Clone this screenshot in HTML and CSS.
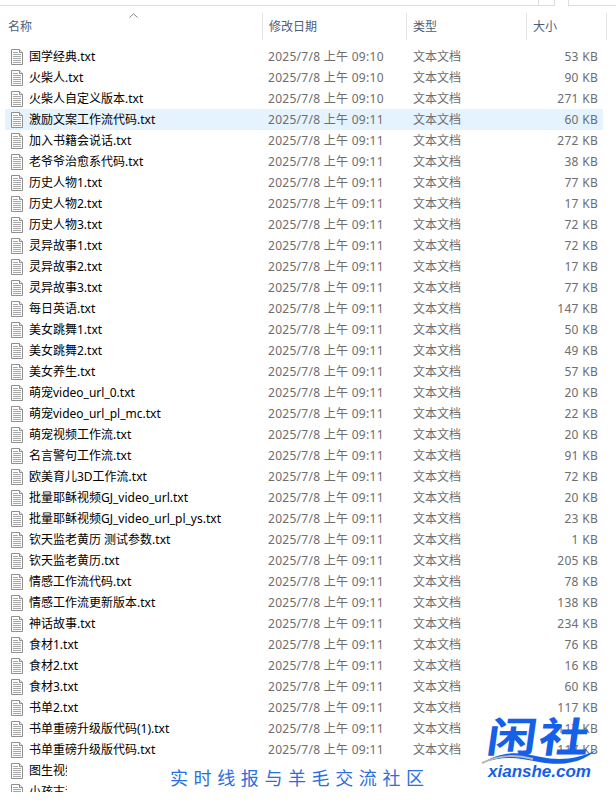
FILE: index.html
```html
<!DOCTYPE html>
<html lang="zh-CN">
<head>
  <meta charset="UTF-8">
  <title>文件列表</title>
  <link rel="stylesheet" href="styles.css">
</head>
<body>
  <svg class="defs" width="0" height="0">
    <symbol id="txt" viewBox="0 0 16 16">
      <path d="M2.5 .5H10.5L13.5 3.5V15.5H2.5Z" fill="#fff" stroke="#8f8f8f"/>
      <path d="M10.5 .5V3.5H13.5" fill="#e8e8e8" stroke="#8f8f8f"/>
      <path d="M4 3.5H9M4 5.5H12M4 7.5H12M4 9.5H12M4 11.5H12M4 13.5H12" stroke="#a6a6a6"/>
    </symbol>
  </svg>

  <div class="topbar">
    <div class="topline"></div>
    <div class="topline gap-a"></div>
    <div class="topline gap-b"></div>
  </div>

  <div class="head">
    <div class="hcell name-h">
      <svg class="sort" viewBox="0 0 9 5"><path d="M.5 4.5L4.5 .8L8.5 4.5" fill="none" stroke="#7d8794"/></svg>
      名称
    </div>
    <div class="hcell">修改日期</div>
    <div class="hcell">类型</div>
    <div class="hcell">大小</div>
  </div>

  <div class="list">
    <div class="row"><div class="name"><svg class="ico"><use href="#txt"/></svg>国学经典.txt</div><div class="date">2025/7/8 上午 09:10</div><div class="type">文本文档</div><div class="size">53 KB</div></div>
    <div class="row"><div class="name"><svg class="ico"><use href="#txt"/></svg>火柴人.txt</div><div class="date">2025/7/8 上午 09:10</div><div class="type">文本文档</div><div class="size">90 KB</div></div>
    <div class="row"><div class="name"><svg class="ico"><use href="#txt"/></svg>火柴人自定义版本.txt</div><div class="date">2025/7/8 上午 09:10</div><div class="type">文本文档</div><div class="size">271 KB</div></div>
    <div class="row selected"><div class="name"><svg class="ico"><use href="#txt"/></svg>激励文案工作流代码.txt</div><div class="date">2025/7/8 上午 09:11</div><div class="type">文本文档</div><div class="size">60 KB</div></div>
    <div class="row"><div class="name"><svg class="ico"><use href="#txt"/></svg>加入书籍会说话.txt</div><div class="date">2025/7/8 上午 09:11</div><div class="type">文本文档</div><div class="size">272 KB</div></div>
    <div class="row"><div class="name"><svg class="ico"><use href="#txt"/></svg>老爷爷治愈系代码.txt</div><div class="date">2025/7/8 上午 09:11</div><div class="type">文本文档</div><div class="size">38 KB</div></div>
    <div class="row"><div class="name"><svg class="ico"><use href="#txt"/></svg>历史人物1.txt</div><div class="date">2025/7/8 上午 09:11</div><div class="type">文本文档</div><div class="size">77 KB</div></div>
    <div class="row"><div class="name"><svg class="ico"><use href="#txt"/></svg>历史人物2.txt</div><div class="date">2025/7/8 上午 09:11</div><div class="type">文本文档</div><div class="size">17 KB</div></div>
    <div class="row"><div class="name"><svg class="ico"><use href="#txt"/></svg>历史人物3.txt</div><div class="date">2025/7/8 上午 09:11</div><div class="type">文本文档</div><div class="size">72 KB</div></div>
    <div class="row"><div class="name"><svg class="ico"><use href="#txt"/></svg>灵异故事1.txt</div><div class="date">2025/7/8 上午 09:11</div><div class="type">文本文档</div><div class="size">72 KB</div></div>
    <div class="row"><div class="name"><svg class="ico"><use href="#txt"/></svg>灵异故事2.txt</div><div class="date">2025/7/8 上午 09:11</div><div class="type">文本文档</div><div class="size">17 KB</div></div>
    <div class="row"><div class="name"><svg class="ico"><use href="#txt"/></svg>灵异故事3.txt</div><div class="date">2025/7/8 上午 09:11</div><div class="type">文本文档</div><div class="size">77 KB</div></div>
    <div class="row"><div class="name"><svg class="ico"><use href="#txt"/></svg>每日英语.txt</div><div class="date">2025/7/8 上午 09:11</div><div class="type">文本文档</div><div class="size">147 KB</div></div>
    <div class="row"><div class="name"><svg class="ico"><use href="#txt"/></svg>美女跳舞1.txt</div><div class="date">2025/7/8 上午 09:11</div><div class="type">文本文档</div><div class="size">50 KB</div></div>
    <div class="row"><div class="name"><svg class="ico"><use href="#txt"/></svg>美女跳舞2.txt</div><div class="date">2025/7/8 上午 09:11</div><div class="type">文本文档</div><div class="size">49 KB</div></div>
    <div class="row"><div class="name"><svg class="ico"><use href="#txt"/></svg>美女养生.txt</div><div class="date">2025/7/8 上午 09:11</div><div class="type">文本文档</div><div class="size">57 KB</div></div>
    <div class="row"><div class="name"><svg class="ico"><use href="#txt"/></svg>萌宠video_url_0.txt</div><div class="date">2025/7/8 上午 09:11</div><div class="type">文本文档</div><div class="size">20 KB</div></div>
    <div class="row"><div class="name"><svg class="ico"><use href="#txt"/></svg>萌宠video_url_pl_mc.txt</div><div class="date">2025/7/8 上午 09:11</div><div class="type">文本文档</div><div class="size">22 KB</div></div>
    <div class="row"><div class="name"><svg class="ico"><use href="#txt"/></svg>萌宠视频工作流.txt</div><div class="date">2025/7/8 上午 09:11</div><div class="type">文本文档</div><div class="size">20 KB</div></div>
    <div class="row"><div class="name"><svg class="ico"><use href="#txt"/></svg>名言警句工作流.txt</div><div class="date">2025/7/8 上午 09:11</div><div class="type">文本文档</div><div class="size">91 KB</div></div>
    <div class="row"><div class="name"><svg class="ico"><use href="#txt"/></svg>欧美育儿3D工作流.txt</div><div class="date">2025/7/8 上午 09:11</div><div class="type">文本文档</div><div class="size">72 KB</div></div>
    <div class="row"><div class="name"><svg class="ico"><use href="#txt"/></svg>批量耶稣视频GJ_video_url.txt</div><div class="date">2025/7/8 上午 09:11</div><div class="type">文本文档</div><div class="size">20 KB</div></div>
    <div class="row"><div class="name"><svg class="ico"><use href="#txt"/></svg>批量耶稣视频GJ_video_url_pl_ys.txt</div><div class="date">2025/7/8 上午 09:11</div><div class="type">文本文档</div><div class="size">23 KB</div></div>
    <div class="row"><div class="name"><svg class="ico"><use href="#txt"/></svg>钦天监老黄历 测试参数.txt</div><div class="date">2025/7/8 上午 09:11</div><div class="type">文本文档</div><div class="size">1 KB</div></div>
    <div class="row"><div class="name"><svg class="ico"><use href="#txt"/></svg>钦天监老黄历.txt</div><div class="date">2025/7/8 上午 09:11</div><div class="type">文本文档</div><div class="size">205 KB</div></div>
    <div class="row"><div class="name"><svg class="ico"><use href="#txt"/></svg>情感工作流代码.txt</div><div class="date">2025/7/8 上午 09:11</div><div class="type">文本文档</div><div class="size">78 KB</div></div>
    <div class="row"><div class="name"><svg class="ico"><use href="#txt"/></svg>情感工作流更新版本.txt</div><div class="date">2025/7/8 上午 09:11</div><div class="type">文本文档</div><div class="size">138 KB</div></div>
    <div class="row"><div class="name"><svg class="ico"><use href="#txt"/></svg>神话故事.txt</div><div class="date">2025/7/8 上午 09:11</div><div class="type">文本文档</div><div class="size">234 KB</div></div>
    <div class="row"><div class="name"><svg class="ico"><use href="#txt"/></svg>食材1.txt</div><div class="date">2025/7/8 上午 09:11</div><div class="type">文本文档</div><div class="size">76 KB</div></div>
    <div class="row"><div class="name"><svg class="ico"><use href="#txt"/></svg>食材2.txt</div><div class="date">2025/7/8 上午 09:11</div><div class="type">文本文档</div><div class="size">16 KB</div></div>
    <div class="row"><div class="name"><svg class="ico"><use href="#txt"/></svg>食材3.txt</div><div class="date">2025/7/8 上午 09:11</div><div class="type">文本文档</div><div class="size">60 KB</div></div>
    <div class="row"><div class="name"><svg class="ico"><use href="#txt"/></svg>书单2.txt</div><div class="date">2025/7/8 上午 09:11</div><div class="type">文本文档</div><div class="size">117 KB</div></div>
    <div class="row"><div class="name"><svg class="ico"><use href="#txt"/></svg>书单重磅升级版代码(1).txt</div><div class="date">2025/7/8 上午 09:11</div><div class="type">文本文档</div><div class="size">117 KB</div></div>
    <div class="row"><div class="name"><svg class="ico"><use href="#txt"/></svg>书单重磅升级版代码.txt</div><div class="date">2025/7/8 上午 09:11</div><div class="type">文本文档</div><div class="size">117 KB</div></div>
    <div class="row cut"><div class="name"><svg class="ico"><use href="#txt"/></svg>图生视频</div></div>
    <div class="row cut"><div class="name"><svg class="ico"><use href="#txt"/></svg>小孩古诗</div></div>
  </div>

  <div class="slogan">实时线报与羊毛交流社区</div>

  <div class="logo">
    <div class="logo-cn">闲社</div>
    <svg class="swoosh" viewBox="0 0 116 20">
      <path d="M1 15C24 1 42 5 60 9C78 13 98 11 115 2C100 16 78 18 58 14C38 10 22 7 1 15Z" fill="#1560e8"/>
      <path d="M1 15C20 6 36 7 52 11" fill="none" stroke="#b9b9b9" stroke-width="2"/>
    </svg>
    <div class="logo-en">xianshe.com</div>
  </div>
</body>
</html>
```

FILE: styles.css
```css
* { box-sizing: border-box; }
html, body { margin: 0; padding: 0; }
body { width: 616px; height: 808px; overflow: hidden; background: #fff; font-family: "Noto Sans", "Noto Sans CJK SC", sans-serif; font-size: 12px; color: #000; position: relative; }
.defs { position: absolute; }

.topbar { display: flex; height: 13px; }
.topline { height: 6px; border-bottom: 1px solid #dcdcdc; width: 538px; }
.gap-a { width: 17px; border-left: 1px solid #dcdcdc; border-right: 1px solid #dcdcdc; }
.gap-b { width: 48px; margin-left: 13px; border-left: 1px solid #dcdcdc; }

.head { display: grid; grid-template-columns: 263px 144px 120px 80px; height: 27px; color: #4c607a; font-size: 12px; }
.hcell { position: relative; border-right: 1px solid #e5e5e5; padding-left: 6px; line-height: 27px; }
.name-h { padding-left: 8px; }
.sort { position: absolute; left: 129px; top: 0; width: 9px; height: 5px; }

.list { margin-top: 6px; height: 746px; overflow: hidden; padding-left: 5px; }
.row { display: grid; grid-template-columns: 257px 145px 130px 61px; width: 598px; height: 21px; line-height: 21px; white-space: nowrap; }
.row.selected { background: #e5f3ff; }
.row.cut .name { width: 62px; overflow: hidden; }
.name { display: flex; align-items: center; }
.ico { width: 16px; height: 16px; margin: 0 4px 0 4px; flex: none; }
.date, .type, .size { color: #6d6d6d; }
.date { padding-left: 6px; letter-spacing: .28px; }
.type { padding-left: 6px; }
.size { text-align: right; letter-spacing: .3px; }

.slogan { position: absolute; left: 170px; top: 766px; font-size: 18px; line-height: 24px; letter-spacing: 5.6px; color: #2a6fe0; white-space: nowrap; }

.logo { position: absolute; left: 481px; top: 712px; width: 118px; height: 70px; }
.logo-cn { position: absolute; left: 10px; top: 0; font-family: "Noto Sans CJK SC", sans-serif; font-weight: 700; font-size: 50px; line-height: 54px; letter-spacing: 2px; color: #1560e8; transform: skewX(-8deg) scaleY(.82); transform-origin: top left; white-space: nowrap; }
.swoosh { position: absolute; left: 0; top: 36px; width: 116px; height: 20px; }
.logo-en { position: absolute; left: 7px; top: 50px; font-family: "Liberation Sans", sans-serif; font-weight: 700; font-style: italic; font-size: 17px; line-height: 20px; color: #1560e8; white-space: nowrap; }
```
